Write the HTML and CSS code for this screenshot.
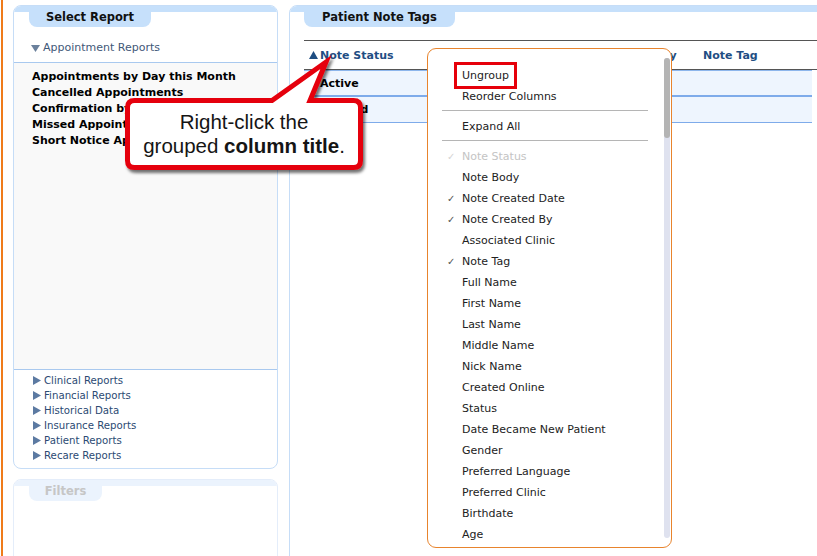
FILE: index.html
```html
<!DOCTYPE html>
<html lang="en">
  <head>
    <meta charset="UTF-8" />
    <title>Patient Note Tags</title>
    <link rel="stylesheet" href="styles.css">
  </head>
  <body>
    <div class="page">
      <aside class="side">
        <section class="panel report-panel">
          <div class="panel-head"><div class="tab">Select Report</div></div>
          <div class="group-open">
            <svg class="tri" width="9" height="9" viewBox="0 0 9 9"><path d="M0 1h9L4.5 8z" /></svg>
            Appointment Reports
          </div>
          <ul class="report-list">
            <li>Appointments by Day this Month</li>
            <li>Cancelled Appointments</li>
            <li>Confirmation by Appointment</li>
            <li>Missed Appointments</li>
            <li>Short Notice Appointments</li>
          </ul>
          <ul class="group-list">
            <li><svg class="tri" width="9" height="9" viewBox="0 0 9 9"><path d="M1 0v9l8-4.5z" /></svg>Clinical Reports</li>
            <li><svg class="tri" width="9" height="9" viewBox="0 0 9 9"><path d="M1 0v9l8-4.5z" /></svg>Financial Reports</li>
            <li><svg class="tri" width="9" height="9" viewBox="0 0 9 9"><path d="M1 0v9l8-4.5z" /></svg>Historical Data</li>
            <li><svg class="tri" width="9" height="9" viewBox="0 0 9 9"><path d="M1 0v9l8-4.5z" /></svg>Insurance Reports</li>
            <li><svg class="tri" width="9" height="9" viewBox="0 0 9 9"><path d="M1 0v9l8-4.5z" /></svg>Patient Reports</li>
            <li><svg class="tri" width="9" height="9" viewBox="0 0 9 9"><path d="M1 0v9l8-4.5z" /></svg>Recare Reports</li>
          </ul>
        </section>
        <section class="panel filter-panel">
          <div class="panel-head"><div class="tab">Filters</div></div>
        </section>
      </aside>

      <main class="panel main-panel">
        <div class="panel-head"><div class="tab">Patient Note Tags</div></div>
        <div class="grid">
          <div class="grid-head">
            <div class="sort">
              <svg class="tri" width="9" height="8" viewBox="0 0 9 8"><path d="M0 8h9L4.5 0z" /></svg>Note Status
            </div>
            <div>Note Created By</div>
            <div>Note Tag</div>
          </div>
          <div class="grid-row first">Active</div>
          <div class="grid-row">Deleted</div>
        </div>
      </main>

      <div class="menu">
        <ul class="menu-list">
          <li class="menu-item"><span class="check"></span><span class="hl">Ungroup</span></li>
          <li class="menu-item"><span class="check"></span>Reorder Columns</li>
          <li class="sep"></li>
          <li class="menu-item"><span class="check"></span>Expand All</li>
          <li class="sep"></li>
          <li class="menu-item off"><span class="check">✓</span>Note Status</li>
          <li class="menu-item"><span class="check"></span>Note Body</li>
          <li class="menu-item"><span class="check">✓</span>Note Created Date</li>
          <li class="menu-item"><span class="check">✓</span>Note Created By</li>
          <li class="menu-item"><span class="check"></span>Associated Clinic</li>
          <li class="menu-item"><span class="check">✓</span>Note Tag</li>
          <li class="menu-item"><span class="check"></span>Full Name</li>
          <li class="menu-item"><span class="check"></span>First Name</li>
          <li class="menu-item"><span class="check"></span>Last Name</li>
          <li class="menu-item"><span class="check"></span>Middle Name</li>
          <li class="menu-item"><span class="check"></span>Nick Name</li>
          <li class="menu-item"><span class="check"></span>Created Online</li>
          <li class="menu-item"><span class="check"></span>Status</li>
          <li class="menu-item"><span class="check"></span>Date Became New Patient</li>
          <li class="menu-item"><span class="check"></span>Gender</li>
          <li class="menu-item"><span class="check"></span>Preferred Language</li>
          <li class="menu-item"><span class="check"></span>Preferred Clinic</li>
          <li class="menu-item"><span class="check"></span>Birthdate</li>
          <li class="menu-item"><span class="check"></span>Age</li>
        </ul>
        <div class="scroll"><div class="thumb"></div></div>
      </div>

      <div class="callout">
        <svg class="callout-shape" width="260" height="135" viewBox="115 50 260 135">
          <defs>
            <filter id="shadow" x="-10%" y="-10%" width="130%" height="140%">
              <feDropShadow dx="2" dy="3" stdDeviation="1.8" flood-color="#000" flood-opacity="0.55" />
            </filter>
          </defs>
          <path filter="url(#shadow)" d="M134.5 100.5H272L326 62L310 100.5H353.5Q360.5 100.5 360.5 107.5V160.5Q360.5 167.5 353.5 167.5H134.5Q127.5 167.5 127.5 160.5V107.5Q127.5 100.5 134.5 100.5Z" />
        </svg>
        <p class="callout-text">Right-click the<br />grouped <b>column title</b>.</p>
      </div>
    </div>
  </body>
</html>
```

FILE: styles.css
```css
* {
  box-sizing: border-box;
  margin: 0;
  padding: 0;
}

body {
  font-family: "DejaVu Sans", Verdana, sans-serif;
  font-size: 11px;
  color: #222;
  background: #fff;
}

.page {
  position: relative;
  display: flex;
  gap: 11px;
  height: 556px;
  padding: 5px 0 0 13px;
  overflow: hidden;
}

/* orange frame edge on the left */
.page::before {
  content: "";
  position: absolute;
  left: 1px;
  top: 0;
  bottom: 0;
  width: 2px;
  background: #ef7b1a;
}

.side {
  width: 265px;
  flex-shrink: 0;
  display: flex;
  flex-direction: column;
  gap: 10px;
}

.panel {
  flex-shrink: 0;
  border: 1px solid #c6ddf7;
  border-radius: 8px;
  background: #fff;
}

.panel-head {
  padding-left: 15px;
  border-radius: 7px 7px 0 0;
  background: linear-gradient(#c6e0fb 0 6px, transparent 6px);
}

.tab {
  width: 122px;
  height: 21px;
  line-height: 22px;
  text-align: center;
  background: #c6e0fb;
  border-radius: 0 0 8px 8px;
  font-size: 11.5px;
  font-weight: bold;
  color: #111;
}

.tri {
  flex-shrink: 0;
}

/* report list */
.report-panel {
  height: 464px;
  display: flex;
  flex-direction: column;
}

.group-open {
  display: flex;
  align-items: center;
  gap: 3px;
  padding: 14px 0 7px 17px;
  line-height: 14px;
  color: #3f5878;
  border-bottom: 1px solid #a9c9ef;
}

.group-open .tri {
  fill: #6b819c;
}

.report-list {
  flex: 1;
  list-style: none;
  background: #f9f9f9;
  padding: 6px 0 0 18px;
  font-weight: bold;
  line-height: 16px;
  color: #000;
}

.group-list {
  list-style: none;
  border-top: 1px solid #a9c9ef;
  padding: 3px 0 5px 18px;
  font-size: 10.2px;
  line-height: 15px;
  color: #2b4a73;
}

.group-list li {
  display: flex;
  align-items: center;
  gap: 3px;
}

.group-list .tri {
  fill: #5c7aa2;
}

.filter-panel {
  height: 120px;
  border-color: #e4edfa;
}

.filter-panel .panel-head {
  background: linear-gradient(#ebf3fd 0 6px, transparent 6px);
}

.filter-panel .tab {
  width: 73px;
  background: #ebf3fd;
  color: #c6c6c6;
}

/* main grid */
.main-panel {
  width: 540px;
  height: 580px;
}

.main-panel .panel-head {
  padding-left: 14px;
}

.main-panel .tab {
  width: 151px;
}

.grid {
  width: 508px;
  margin: 13px 0 0 14px;
}

.grid-head {
  display: grid;
  grid-template-columns: 271px 128px 1fr;
  align-items: center;
  height: 30px;
  margin-right: -12px;
  border-top: 1px solid #555;
  border-bottom: 1px solid #555;
  font-weight: bold;
  color: #1f4e83;
}

.sort {
  display: flex;
  align-items: center;
  gap: 2px;
  padding-left: 5px;
}

.sort .tri {
  fill: #1e4d82;
}

.grid-row {
  height: 26px;
  line-height: 26px;
  padding-left: 16px;
  background: #eef5fe;
  border-bottom: 1px solid #7eabea;
  font-weight: bold;
  color: #000;
}

.grid-row.first {
  height: 27px;
  border-top: 1px solid #8db6ec;
  border-bottom-width: 2px;
  line-height: 26px;
}

/* context menu */
.menu {
  position: absolute;
  left: 427px;
  top: 48px;
  width: 245px;
  height: 500px;
  display: flex;
  background: #fff;
  border: 1px solid #e8842d;
  border-radius: 9px;
}

.menu-list {
  flex: 1;
  list-style: none;
  padding: 16px 16px 0 14px;
}

.menu-item {
  display: flex;
  align-items: center;
  height: 21px;
  padding-left: 5px;
  color: #222;
}

.check {
  width: 15px;
  font-size: 10px;
  color: #555;
}

.menu-item.off {
  color: #c4c4c4;
}

.menu-item.off .check {
  color: #d4d4d4;
}

.sep {
  height: 1px;
  margin: 3px 0 5px;
  background: #b5b5b5;
}

.hl {
  display: inline-block;
  line-height: 21px;
  padding: 0 5px;
  margin-left: -5px;
  outline: 3.5px solid #e6000a;
}

.scroll {
  width: 6px;
  margin: 9px 1px 9px 0;
  background: #dfe2ef;
  border-radius: 3px;
}

.thumb {
  height: 80px;
  background: #b4b4b4;
  border-radius: 3px;
}

/* annotation bubble */
.callout {
  position: absolute;
  left: 115px;
  top: 50px;
  width: 260px;
  height: 135px;
}

.callout-shape {
  position: absolute;
  left: 0;
  top: 0;
}

.callout-shape path {
  fill: #fff;
  stroke: #e5000b;
  stroke-width: 5;
  stroke-linejoin: miter;
}

.callout-text {
  position: relative;
  width: 234px;
  margin: 60px 0 0 12px;
  text-align: center;
  font-family: "Liberation Sans", Arial, sans-serif;
  font-size: 20.5px;
  line-height: 24px;
  color: #151515;
}
```
